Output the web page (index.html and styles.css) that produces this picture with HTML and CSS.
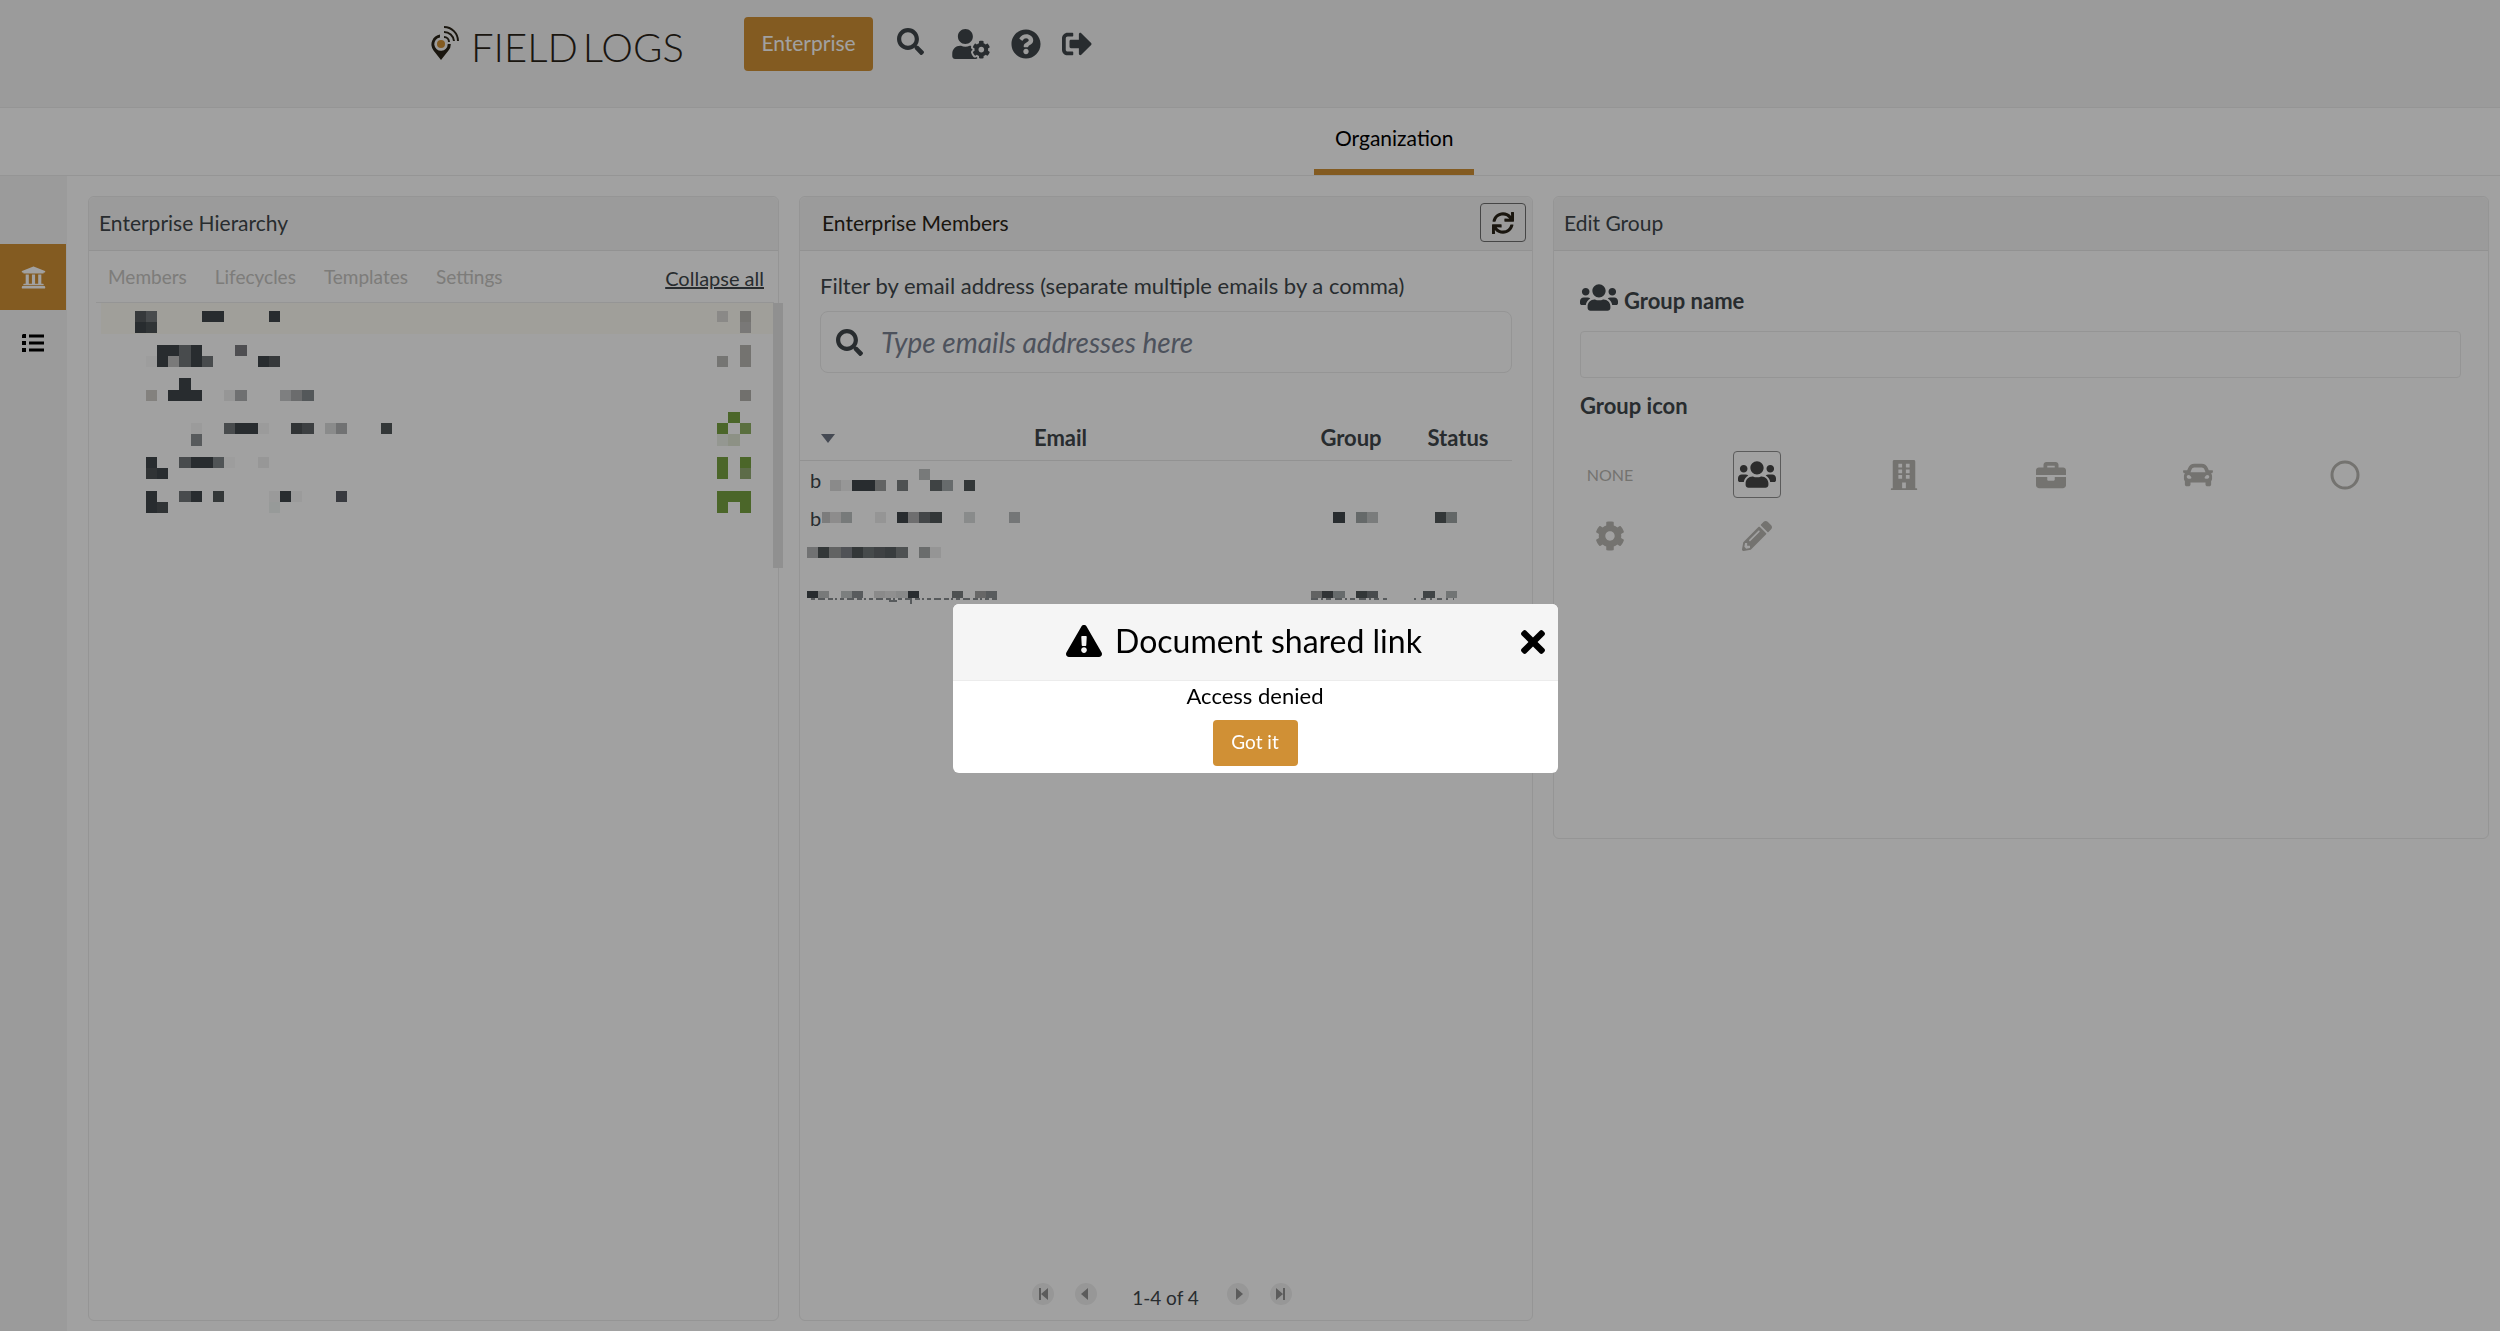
FILE: index.html
```html
<!DOCTYPE html>
<html lang="en">
<head>
    <meta charset="UTF-8">
    <meta name="viewport" content="width=device-width, initial-scale=1.0">
    <title>Field Logs - Organization</title>
    <link rel="stylesheet" href="styles.css">
</head>
<body>
    <!-- Shared icons -->
    <svg class="sprite" aria-hidden="true">
        <symbol id="i-search" viewBox="0 0 512 512"><path d="M505 442.7L405.3 343c-4.5-4.5-10.6-7-17-7H372c27.6-35.3 44-79.7 44-128C416 93.1 322.9 0 208 0S0 93.1 0 208s93.1 208 208 208c48.3 0 92.7-16.4 128-44v16.3c0 6.4 2.5 12.5 7 17l99.7 99.7c9.4 9.4 24.6 9.4 33.9 0l28.3-28.3c9.4-9.4 9.4-24.6.1-34zM208 336c-70.7 0-128-57.2-128-128 0-70.7 57.2-128 128-128 70.7 0 128 57.2 128 128 0 70.7-57.2 128-128 128z"/></symbol>
        <symbol id="i-users" viewBox="0 32 640 448"><path d="M96 224c35.3 0 64-28.7 64-64s-28.7-64-64-64-64 28.7-64 64 28.7 64 64 64zm448 0c35.3 0 64-28.7 64-64s-28.7-64-64-64-64 28.7-64 64 28.7 64 64 64zm32 32h-64c-17.6 0-33.5 7.1-45.1 18.6 40.3 22.1 68.9 62 75.1 109.4h66c17.7 0 32-14.3 32-32v-32c0-35.3-28.7-64-64-64zm-256 0c61.9 0 112-50.1 112-112S381.9 32 320 32 208 82.1 208 144s50.1 112 112 112zm76.8 32h-8.3c-20.8 10-43.9 16-68.5 16s-47.6-6-68.5-16h-8.3C179.6 288 128 339.6 128 403.2V432c0 26.5 21.5 48 48 48h288c26.5 0 48-21.5 48-48v-28.8c0-63.6-51.6-115.2-115.2-115.2zm-223.7-13.4C161.5 263.1 145.6 256 128 256H64c-35.3 0-64 28.7-64 64v32c0 17.7 14.3 32 32 32h65.9c6.3-47.4 34.9-87.3 75.2-109.4z"/></symbol>
    </svg>

    <header class="topbar">
        <a class="logo" href="#">
            <svg width="28" height="34" viewBox="0 0 28 34" aria-hidden="true">
                <path fill-rule="evenodd" d="M10 34L2.500 24.500A10 10 0 0 1 9 8.500V11.500A6.700 6.700 0 1 0 16.700 18H19.800A10 10 0 0 1 17.500 24.500z" fill="#2a2418"/>
                <circle cx="10" cy="18" r="4" fill="#d09035"/>
                <path d="M13 11a5 5 0 0 1 5 5 M13 6a10 10 0 0 1 10 9 M13 1a14 14 0 0 1 14 14" fill="none" stroke="#2a2418" stroke-width="2"/>
            </svg>
            <span>FIELD&thinsp;LOGS</span>
        </a>
        <button class="btn enterprise-btn" type="button">Enterprise</button>
        <nav class="top-icons">
            <a class="search-link" href="#" aria-label="Search"><svg class="i-27"><use href="#i-search"/></svg></a>
            <a href="#" aria-label="User settings"><svg class="i-user" viewBox="0 0 640 512"><path d="M610.5 373.3c2.6-14.1 2.6-28.5 0-42.6l25.8-14.9c3-1.7 4.3-5.2 3.3-8.5-6.7-21.6-18.2-41.2-33.2-57.4-2.3-2.5-6-3.1-9-1.4l-25.8 14.9c-10.9-9.3-23.4-16.5-36.9-21.3v-29.8c0-3.4-2.4-6.4-5.7-7.1-22.3-5-45-4.8-66.2 0-3.3.7-5.7 3.7-5.7 7.1v29.8c-13.5 4.8-26 12-36.9 21.3l-25.8-14.9c-2.9-1.7-6.7-1.1-9 1.4-15 16.2-26.5 35.8-33.2 57.4-1 3.3.4 6.8 3.3 8.5l25.8 14.9c-2.6 14.1-2.6 28.5 0 42.6l-25.8 14.9c-3 1.7-4.3 5.2-3.3 8.5 6.7 21.6 18.2 41.1 33.2 57.4 2.3 2.5 6 3.1 9 1.4l25.8-14.9c10.9 9.3 23.4 16.5 36.9 21.3v29.8c0 3.4 2.4 6.4 5.7 7.1 22.3 5 45 4.8 66.2 0 3.3-.7 5.7-3.7 5.7-7.1v-29.8c13.5-4.8 26-12 36.9-21.3l25.8 14.9c2.9 1.7 6.7 1.1 9-1.4 15-16.2 26.5-35.8 33.2-57.4 1-3.3-.4-6.8-3.3-8.5l-25.8-14.9zM496 400.5c-26.8 0-48.5-21.8-48.5-48.5s21.8-48.5 48.5-48.5 48.5 21.8 48.5 48.5-21.7 48.5-48.5 48.5zM224 256c70.7 0 128-57.3 128-128S294.7 0 224 0 96 57.3 96 128s57.3 128 128 128zm201.2 226.5c-2.3-1.2-4.6-2.6-6.8-3.9l-7.9 4.6c-6 3.4-12.8 5.3-19.6 5.3-10.9 0-21.4-4.6-28.9-12.6-18.3-19.8-32.3-43.9-40.2-69.6-5.5-17.7 1.9-36.4 17.9-45.7l7.9-4.6c-.1-2.6-.1-5.2 0-7.8l-7.9-4.6c-16-9.2-23.4-28-17.9-45.7.9-2.9 2.2-5.8 3.2-8.7-3.8-.3-7.5-1.2-11.4-1.2h-16.7c-22.2 10.2-46.9 16-72.9 16s-50.6-5.8-72.9-16h-16.7C60.2 288 0 348.2 0 422.4V464c0 26.5 21.5 48 48 48h352c10.1 0 19.5-3.2 27.2-8.5-1.2-3.8-2-7.7-2-11.8v-9.2z"/></svg></a>
            <a href="#" aria-label="Help"><svg class="i-30" viewBox="0 0 512 512"><path d="M504 256c0 136.997-111.043 248-248 248S8 392.997 8 256C8 119.083 119.043 8 256 8s248 111.083 248 248zM262.655 90c-54.497 0-89.255 22.957-116.549 63.758-3.536 5.286-2.353 12.415 2.715 16.258l34.699 26.31c5.205 3.947 12.621 3.008 16.665-2.122 17.864-22.658 30.113-35.797 57.303-35.797 20.429 0 45.698 13.148 45.698 32.958 0 14.976-12.363 22.667-32.534 33.976C247.128 238.528 216 254.941 216 296v4c0 6.627 5.373 12 12 12h56c6.627 0 12-5.373 12-12v-1.333c0-28.462 83.186-29.647 83.186-106.667 0-58.002-60.165-102-116.531-102zM256 338c-25.365 0-46 20.635-46 46 0 25.364 20.635 46 46 46s46-20.636 46-46c0-25.365-20.635-46-46-46z"/></svg></a>
            <a href="#" aria-label="Sign out"><svg class="i-30" viewBox="0 0 512 512"><path d="M497 273L329 441c-15 15-41 4.5-41-17v-96H152c-13.3 0-24-10.7-24-24v-96c0-13.3 10.7-24 24-24h136V88c0-21.4 25.9-32 41-17l168 168c9.3 9.4 9.3 24.6 0 34zM192 436v-40c0-6.6-5.4-12-12-12H96c-17.7 0-32-14.3-32-32V160c0-17.7 14.3-32 32-32h84c6.6 0 12-5.4 12-12V76c0-6.6-5.4-12-12-12H96c-53 0-96 43-96 96v192c0 53 43 96 96 96h84c6.6 0 12-5.4 12-12z"/></svg></a>
        </nav>
    </header>

    <nav class="tabbar">
        <a class="tab" href="#">Organization</a>
    </nav>

    <div class="layout">
        <aside class="sidebar">
            <a class="side-link active" href="#" aria-label="Organization"><svg class="i-25" viewBox="0 0 512 512"><path d="M496 128v16a8 8 0 0 1-8 8h-24v12c0 6.627-5.373 12-12 12H60c-6.627 0-12-5.373-12-12v-12H24a8 8 0 0 1-8-8v-16a8 8 0 0 1 4.941-7.392l232-88a7.996 7.996 0 0 1 6.118 0l232 88A8 8 0 0 1 496 128zm-24 304H40c-13.255 0-24 10.745-24 24v16a8 8 0 0 0 8 8h464a8 8 0 0 0 8-8v-16c0-13.255-10.745-24-24-24zM96 192v192H60c-6.627 0-12 5.373-12 12v20h416v-20c0-6.627-5.373-12-12-12h-36V192h-64v192h-64V192h-64v192h-64V192H96z"/></svg></a>
            <a class="side-link" href="#" aria-label="Lists"><svg width="22" height="18" viewBox="0 0 22 18"><path d="M1 0h3v4h-4v-3zM0 7h4v4h-4zM0 14h4v4h-4zM7 .5h15v3h-15zM7 7.5h15v3h-15zM7 14.5h15v3h-15z"/></svg></a>
        </aside>

        <main class="columns">
            <!-- Hierarchy -->
            <section class="card">
                <h2 class="card-header">Enterprise Hierarchy</h2>
                <div class="hierarchy">
                    <div class="sub-tabs">
                        <a href="#">Members</a>
                        <a href="#">Lifecycles</a>
                        <a href="#">Templates</a>
                        <a href="#">Settings</a>
                        <a class="collapse" href="#">Collapse all</a>
                    </div>
                    <div class="tree-wrap">
                        <div class="tree">
                            <svg class="mosaic" width="291" height="202" viewBox="0 0 26 18" data-cells="3:565b5e 4:72777a 9-10:D 15:D|3:D 4:4d5356||5-6:D 7:72777a 8:D 12:7c7c80|4:f9f9f9 5:D 6:c2c2c2 7:72777a 8:D 9:72777a 14:D 15:565b5e||7:D|4:d0cdc8 6-8:D 11:eeeeee 12:b0b2b3 16:c8cacb 17:aaacad 18:858c8f|||8:f5f5f5 11:72777a 12-13:D 14:f5f5f5 17:4d5154 18:5f6567 20:dbdcdc 21:b4b5b6 25:51575a|8:8a8f92||4:D 7:72777a 8-9:D 10:7f8588 11:f9f9f9 14:f0f0f0|4:4d5154 5:D||4:D 7:72777a 8:D 10:51575a 15:f4f4f4 16:D 17:f6f6f6 21:5a5c64|4:D 5:4d5154 15:f0f4f2"></svg>
                            <svg class="mosaic" width="34" height="202" viewBox="0 0 3 18" data-cells="0:dbdad6 2:b8b6b1|2:c0bfbd||2:b8b6b1|0:b9b9b7 2:b8b6b1|||2:b4b2ad||1:G|0:G 2:8fb064|0:ebf0e6 1:dfe6d3||0:G 2:G|0:G 2:93ab74||0-2:G|0:G 2:G"></svg>
                        </div>
                        <div class="scrollbar"></div>
                    </div>
                </div>
            </section>

            <!-- Members -->
            <section class="card members">
                <div class="card-header">
                    <h2>Enterprise Members</h2>
                    <button class="refresh" type="button" aria-label="Refresh"><svg class="i-22" viewBox="0 0 512 512"><path d="M440.65 12.57l4 82.77A247.16 247.16 0 0 0 255.83 8C134.73 8 33.91 94.92 12.29 209.82A12 12 0 0 0 24.09 224h49.05a12 12 0 0 0 11.67-9.26 175.91 175.91 0 0 1 317-56.94l-101.46-4.86a12 12 0 0 0-12.57 12v47.41a12 12 0 0 0 12 12H500a12 12 0 0 0 12-12V12a12 12 0 0 0-12-12h-47.37a12 12 0 0 0-11.98 12.57zM255.83 432a175.61 175.61 0 0 1-146-77.8l101.8 4.87a12 12 0 0 0 12.57-12v-47.4a12 12 0 0 0-12-12H12a12 12 0 0 0-12 12V500a12 12 0 0 0 12 12h47.35a12 12 0 0 0 12-12.6l-4.15-82.57A247.17 247.17 0 0 0 255.83 504c121.11 0 221.93-86.92 243.55-201.82a12 12 0 0 0-11.8-14.18h-49.05a12 12 0 0 0-11.67 9.26A175.86 175.86 0 0 1 255.83 432z"/></svg></button>
                </div>
                <div class="filter">
                    <label for="filter">Filter by email address (separate multiple emails by a comma)</label>
                    <div class="search-box">
                        <svg class="i-27"><use href="#i-search"/></svg>
                        <input id="filter" type="text" placeholder="Type emails addresses here">
                    </div>
                </div>
                <table>
                    <thead>
                        <tr>
                            <th><svg class="sort" width="14" height="9" viewBox="0 0 14 9"><path d="M0 0h14l-7 9z"/></svg>Email</th>
                            <th class="col-group">Group</th>
                            <th class="col-status">Status</th>
                        </tr>
                    </thead>
                    <tbody>
                        <tr>
                            <td><div class="cell"><span class="initial">b</span><svg class="mosaic" width="200" height="22" viewBox="1.3 0 17.9 2" data-cells="10:bfc1c1|2:dbdbdb 3:efefef 4-5:D 6:9b9d9e 8:7c8083 11:646a6c 12:a4aaab 14:51575a"></svg></div></td>
                            <td></td>
                            <td></td>
                        </tr>
                        <tr>
                            <td><div class="cell"><span class="initial">b</span><svg class="mosaic" width="200" height="11" viewBox="1.3 0 17.9 1" data-cells="1:c5c5c5 2:e0dede 3:bdc1c1 6:ececec 8:D 9:afafb0 10:6a7073 11:51575a 14:dadddc 18:b8bcbd"></svg></div></td>
                            <td><svg class="mosaic" width="67" height="11" viewBox="0 0 6 1" data-cells="2:D 4:a0a6a6 5:c2c4c4"></svg></td>
                            <td><svg class="mosaic" width="45" height="11" viewBox="0 0 4 1" data-cells="2:51575a 3:9ea3a3"></svg></td>
                        </tr>
                        <tr class="short">
                            <td><div class="cell"><svg class="mosaic" width="134" height="11" viewBox="0 0 12 1" data-cells="0:b4b5b6 1:51575a 2:9b9d9e 3:7f8388 4:51575a 5:6f7678 6:62686a 7:5a6062 8:7c8083 10:a9abac 11:ededed"></svg></div></td>
                            <td></td>
                            <td></td>
                        </tr>
                        <tr class="last">
                            <td><div class="cell stacked"><svg class="mosaic" width="190" height="7" viewBox="0 0 17 1" data-cells="0:D 1:bfc1c1 3:c5c9c9 4:8c9194 6:dbdbdb 7:e3e3e3 8:d8dada 9:D 13:7c8083 15:a4a4a4 16:8c9194"></svg><svg width="190" height="6" viewBox="0 0 190 6"><path class="feet" stroke-dasharray="4 3 7 3 5 2 2 3" d="M4 1H190"/><path class="feet" d="M82 3h8M104 0v6"/></svg></div></td>
                            <td><div class="cell stacked"><svg class="mosaic" width="67" height="7" viewBox="0 0 6 1" data-cells="0:9b9d9e 1:4d5154 2:a4aaab 4:51575a 5:72777a"></svg><svg width="78" height="6" viewBox="0 0 78 6"><path class="feet" stroke-dasharray="7 3 2 3 5 4" d="M0 1H76"/></svg></div></td>
                            <td><div class="cell stacked"><svg class="mosaic" width="45" height="7" viewBox="0 0 4 1" data-cells="1:666c6f 3:b4b8b8"></svg><svg width="45" height="6" viewBox="0 0 45 6"><path class="feet" stroke-dasharray="2 5 5 4" d="M2 1H42"/></svg></div></td>
                        </tr>
                    </tbody>
                </table>
                <div class="pager">
                    <button type="button" aria-label="First page"><svg width="22" height="22" viewBox="0 0 22 22"><path d="M7 5h2v12h-2zM16 5v12l-7-6z"/></svg></button>
                    <button type="button" aria-label="Previous page"><svg width="22" height="22" viewBox="0 0 22 22"><path d="M13 5v12l-7-6z"/></svg></button>
                    <span>1-4 of 4</span>
                    <button type="button" aria-label="Next page"><svg width="22" height="22" viewBox="0 0 22 22"><path d="M9 5v12l7-6z"/></svg></button>
                    <button type="button" aria-label="Last page"><svg width="22" height="22" viewBox="0 0 22 22"><path d="M13 5h2v12h-2zM6 5v12l7-6z"/></svg></button>
                </div>
            </section>

            <!-- Edit group -->
            <section class="card edit">
                <h2 class="card-header">Edit Group</h2>
                <div class="edit-body">
                    <label class="name-label" for="group-name"><svg class="i-users"><use href="#i-users"/></svg>Group name</label>
                    <input id="group-name" type="text">
                    <h3>Group icon</h3>
                    <div class="icon-grid">
                        <button type="button">NONE</button>
                        <button class="selected" type="button" aria-label="Users"><svg class="i-users"><use href="#i-users"/></svg></button>
                        <button type="button" aria-label="Building"><svg class="i-30" viewBox="0 0 512 512"><path fill-rule="evenodd" d="M468 480h-20V24c0-13-11-24-24-24H88C75 0 64 11 64 24v456H44c-7 0-12 5-12 12v20h448v-20c0-7-5-12-12-12zM160 64h64v64h-64zM288 64h64v64h-64zM160 160h64v64h-64zM288 160h64v64h-64zM160 256h64v64h-64zM288 256h64v64h-64zM224 384h64v96h-64z"/></svg></button>
                        <button type="button" aria-label="Briefcase"><svg class="i-30" viewBox="0 0 512 512"><path d="M320 336c0 8.84-7.16 16-16 16h-96c-8.84 0-16-7.16-16-16v-48H0v144c0 25.6 22.4 48 48 48h416c25.6 0 48-22.4 48-48V288H320v48zm144-208h-80V80c0-25.6-22.4-48-48-48H176c-25.6 0-48 22.4-48 48v48H48c-25.6 0-48 22.4-48 48v80h512v-80c0-25.6-22.4-48-48-48zm-144 0H192V96h128v32z"/></svg></button>
                        <button type="button" aria-label="Car"><svg class="i-30" viewBox="0 0 512 512"><path d="M499.99 176h-59.87l-16.64-41.6C406.38 91.63 365.57 64 319.5 64h-127c-46.06 0-86.88 27.63-103.99 70.4L71.87 176H12.01C4.2 176-1.53 183.34.37 190.91l6 24C7.7 220.25 12.5 224 18.01 224h20.07C24.65 235.73 16 252.78 16 272v48c0 16.12 6.16 30.67 16 41.93V416c0 17.67 14.33 32 32 32h32c17.67 0 32-14.33 32-32v-32h256v32c0 17.67 14.33 32 32 32h32c17.67 0 32-14.33 32-32v-54.07c9.84-11.25 16-25.8 16-41.93v-48c0-19.22-8.65-36.27-22.07-48H494c5.51 0 10.31-3.75 11.64-9.09l6-24c1.89-7.57-3.84-14.91-11.65-14.91zm-352.06-17.83c7.29-18.22 24.94-30.17 44.57-30.17h127c19.63 0 37.28 11.95 44.57 30.17L384 208H128l19.93-49.83zM96 319.8c-19.2 0-32-12.76-32-31.9S76.8 256 96 256s48 28.71 48 47.85-28.8 15.95-48 15.95zm320 0c-19.2 0-48 3.19-48-15.95S396.8 256 416 256s32 12.76 32 31.9-12.8 31.9-32 31.9z"/></svg></button>
                        <button type="button" aria-label="Circle"><svg class="i-30" viewBox="0 0 30 30"><circle cx="15" cy="15" r="13" fill="none" stroke="currentColor" stroke-width="3"/></svg></button>
                        <button type="button" aria-label="Gear"><svg class="i-30" viewBox="0 0 512 512"><path d="M487.4 315.7l-42.6-24.6c4.3-23.2 4.3-47 0-70.2l42.6-24.6c4.9-2.8 7.1-8.6 5.5-14-11.1-35.6-30-67.8-54.7-94.6-3.8-4.1-10-5.1-14.8-2.3L380.8 110c-17.9-15.4-38.5-27.3-60.8-35.1V25.8c0-5.6-3.9-10.5-9.4-11.7-36.7-8.2-74.3-7.8-109.2 0-5.5 1.2-9.4 6.1-9.4 11.7V75c-22.2 7.9-42.8 19.8-60.8 35.1L88.7 85.5c-4.9-2.8-11-1.9-14.8 2.3-24.7 26.7-43.6 58.9-54.7 94.6-1.7 5.4.6 11.2 5.5 14L67.3 221c-4.3 23.2-4.3 47 0 70.2l-42.6 24.6c-4.9 2.8-7.1 8.6-5.5 14 11.1 35.6 30 67.8 54.7 94.6 3.8 4.1 10 5.1 14.8 2.3l42.6-24.6c17.9 15.4 38.5 27.3 60.8 35.1v49.2c0 5.6 3.9 10.5 9.4 11.7 36.7 8.2 74.3 7.8 109.2 0 5.5-1.2 9.4-6.1 9.4-11.7v-49.2c22.2-7.9 42.8-19.8 60.8-35.1l42.6 24.6c4.9 2.8 11 1.9 14.8-2.3 24.7-26.7 43.6-58.9 54.7-94.6 1.5-5.5-.7-11.3-5.6-14.1zM256 336c-44.1 0-80-35.9-80-80s35.9-80 80-80 80 35.9 80 80-35.9 80-80 80z"/></svg></button>
                        <button type="button" aria-label="Pencil"><svg class="i-30" viewBox="0 0 512 512"><path d="M497.9 142.1l-46.1 46.1c-4.7 4.7-12.3 4.7-17 0l-111-111c-4.7-4.7-4.7-12.3 0-17l46.1-46.1c18.7-18.7 49.1-18.7 67.9 0l60.1 60.1c18.8 18.7 18.8 49.1 0 67.9zM284.2 99.8L21.6 362.4.4 483.9c-2.9 16.4 11.4 30.6 27.8 27.8l121.5-21.3 262.6-262.6c4.7-4.7 4.7-12.3 0-17l-111-111c-4.8-4.7-12.4-4.7-17.1 0zM124.1 339.9c-5.5-5.5-5.5-14.3 0-19.8l154-154c5.5-5.5 14.3-5.5 19.8 0s5.5 14.3 0 19.8l-154 154c-5.5 5.5-14.3 5.5-19.8 0zM88 424h48v36.3l-64.5 11.3-31.1-31.1L51.7 376H88v48z"/></svg></button>
                    </div>
                </div>
            </section>
        </main>
    </div>

    <!-- Access denied dialog -->
    <div class="backdrop">
        <div class="modal" role="dialog" aria-labelledby="modal-title">
            <div class="modal-header">
                <svg class="i-warning" viewBox="0 0 576 512"><path d="M569.517 440.013C587.975 472.007 564.806 512 527.94 512H48.054c-36.937 0-59.999-40.055-41.577-71.987L246.423 23.985c18.467-32.009 64.72-31.951 83.154 0l239.94 416.028zM288 354c-25.405 0-46 20.595-46 46s20.595 46 46 46 46-20.595 46-46-20.595-46-46-46zm-43.673-165.346l7.418 136c.347 6.364 5.609 11.346 11.982 11.346h48.546c6.373 0 11.635-4.982 11.982-11.346l7.418-136c.375-6.874-5.098-12.654-11.982-12.654h-63.383c-6.884 0-12.356 5.78-11.981 12.654z"/></svg>
                <h1 id="modal-title">Document shared link</h1>
                <button class="close" type="button" aria-label="Close"><svg width="24" height="24" viewBox="0 80 352 352"><path d="M242.72 256l100.07-100.07c12.28-12.28 12.28-32.19 0-44.48l-22.24-22.24c-12.28-12.28-32.19-12.28-44.48 0L176 189.28 75.93 89.21c-12.28-12.28-32.19-12.28-44.48 0L9.21 111.45c-12.28 12.28-12.28 32.19 0 44.48L109.28 256 9.21 356.07c-12.28 12.28-12.28 32.19 0 44.48l22.24 22.24c12.28 12.28 32.2 12.28 44.48 0L176 322.72l100.07 100.07c12.28 12.28 32.2 12.28 44.48 0l22.24-22.24c12.28-12.28 12.28-32.19 0-44.48L242.72 256z"/></svg></button>
            </div>
            <div class="modal-body">
                <p>Access denied</p>
                <button class="btn" type="button">Got it</button>
            </div>
        </div>
    </div>

    <script src="script.js"></script>
</body>
</html>
```
FILE: styles.css
```css
* {
    margin: 0;
    padding: 0;
    box-sizing: border-box;
}

body {
    min-height: 100vh;
    display: flex;
    flex-direction: column;
    font-family: Lato, "Liberation Sans", sans-serif;
    font-size: 21px;
    line-height: 26px;
    color: #40474b;
    background: #fff;
}

a {
    color: inherit;
    text-decoration: none;
}

button, input {
    font: inherit;
    color: inherit;
    background: none;
    border: none;
}

button {
    cursor: pointer;
}

svg {
    display: block;
    fill: currentColor;
}

h1, h2 {
    font-size: inherit;
    font-weight: 400;
}

.sprite {
    position: absolute;
    width: 0;
    height: 0;
}

/* Icon sizes */
.i-22 { width: 22px; height: 22px; }
.i-25 { width: 25px; height: 25px; }
.i-27 { width: 27px; height: 27px; }
.i-30 { width: 30px; height: 30px; }
.i-user { width: 38px; height: 30px; }
.i-users { width: 38px; height: 27px; }
.i-warning { width: 36px; height: 32px; }

.btn {
    background: #d09035;
    color: #fff;
    border-radius: 4px;
}

/* Top bar */
.topbar {
    display: flex;
    align-items: flex-start;
    height: 108px;
    padding: 17px 0 0 431px;
    background: #f6f6f6;
    border-bottom: 1px solid #ececec;
}

.logo {
    display: flex;
    gap: 12px;
    width: 313px;
    padding-top: 9px;
    color: #2a2418;
    font-size: 40px;
    font-weight: 300;
    line-height: 42px;
    white-space: nowrap;
}

.enterprise-btn {
    height: 54px;
    width: 129px;
    padding-bottom: 2px;
}

.top-icons {
    display: flex;
    align-items: center;
    gap: 21px;
    height: 54px;
    padding-left: 24px;
}

.search-link {
    padding: 0 7px 6px 0;
}

/* Tabs */
.tabbar {
    display: flex;
    height: 68px;
    padding-left: 1314px;
    border-bottom: 1px solid #ececec;
}

.tab {
    padding: 17px 21px 0;
    color: #000;
    border-bottom: 6px solid #d09035;
}

.layout {
    flex: 1;
    display: flex;
}

/* Sidebar */
.sidebar {
    width: 67px;
    padding-top: 68px;
    background: #f6f6f6;
    color: #000;
}

.side-link {
    display: flex;
    align-items: center;
    justify-content: center;
    width: 66px;
    height: 66px;
}

.side-link.active {
    background: #d09035;
    color: #fff;
}

/* Cards */
.columns {
    flex: 1;
    display: grid;
    grid-template-columns: 691fr 734fr 936fr;
    gap: 20px;
    padding: 20px 11px 10px 21px;
}

.card {
    border: 1px solid #ececec;
    border-radius: 6px;
    min-width: 0;
}

.card-header {
    display: flex;
    align-items: center;
    justify-content: space-between;
    height: 54px;
    padding: 0 6px 2px 10px;
    background: #f6f6f6;
    border-bottom: 1px solid #e8e8e8;
    border-radius: 6px 6px 0 0;
}

/* Hierarchy */
.hierarchy {
    padding: 0 4px 0 7px;
}

.sub-tabs {
    display: flex;
    align-items: center;
    gap: 28px;
    height: 52px;
    padding: 0 10px 0 12px;
    border-bottom: 1px solid #ececec;
    color: #c6c5c2;
    font-size: 19px;
}

.collapse {
    margin-left: auto;
    padding-top: 2px;
    color: #40474b;
    font-size: 20px;
    text-decoration: underline;
}

.tree-wrap {
    display: flex;
    margin-right: -9px;
    padding-left: 5px;
}

.tree {
    flex: 1;
    display: flex;
    justify-content: space-between;
    padding: 8px 22px 0 0;
    background: linear-gradient(#fefcf4, #fefcf4) no-repeat;
    background-size: 100% 31px;
}

.scrollbar {
    width: 10px;
    height: 265px;
    background: #e5e5e5;
}

/* Members */
.members {
    display: flex;
    flex-direction: column;
}

.members .card-header {
    padding-left: 22px;
    color: #2a2418;
}

.refresh {
    display: flex;
    align-items: center;
    justify-content: center;
    width: 46px;
    height: 39px;
    border: 1px solid #707070;
    border-radius: 4px;
}

.filter {
    padding: 22px 20px 0;
}

.filter label {
    font-size: 22px;
}

.search-box {
    display: flex;
    align-items: center;
    height: 62px;
    margin-top: 12px;
    padding: 0 15px;
    gap: 18px;
    border: 1px solid #ececec;
    border-radius: 8px;
}

.search-box input {
    flex: 1;
    font-size: 28px;
    font-style: italic;
}

.search-box input::placeholder {
    color: #7a8292;
    opacity: 1;
}

table {
    margin: 52px 20px 0 0;
    border-collapse: collapse;
    table-layout: fixed;
}

th {
    height: 35px;
    padding: 0 12px 9px 21px;
    border-bottom: 1px solid #e8e8e8;
    font-size: 22px;
}

.sort {
    float: left;
    margin-top: 9px;
    fill: #6e7684;
}

.col-group {
    width: 106px;
    padding: 0 0 9px;
}

.col-status {
    width: 108px;
    padding: 0 0 9px;
}

td {
    height: 38px;
}

td + td {
    padding-left: 13px;
}

td:last-child {
    padding-left: 8px;
}

.short td {
    height: 32px;
}

.last td {
    height: 57px;
}

.cell {
    display: flex;
    align-items: center;
}

td:first-child .cell {
    padding-left: 7px;
}

.initial {
    width: 15px;
    padding-left: 3px;
    font-size: 20px;
}

.stacked {
    flex-direction: column;
    align-items: flex-start;
}

.feet {
    fill: none;
    stroke: #8a8f92;
    stroke-width: 2;
}

.mosaic {
    shape-rendering: crispEdges;
}

.pager {
    display: flex;
    justify-content: center;
    gap: 21px;
    margin-top: auto;
    padding: 0 8px 9px 0;
}

.pager button {
    width: 22px;
    height: 22px;
    border-radius: 50%;
    background: #f0f0f0;
    color: #929292;
}

.pager span {
    padding: 2px 7px 0 14px;
    font-size: 19px;
}

/* Edit group */
.edit {
    align-self: start;
    min-height: 643px;
}

.edit-body {
    padding: 33px 27px 0 26px;
    font-size: 22px;
}

.name-label {
    display: flex;
    align-items: flex-end;
    gap: 6px;
    height: 30px;
    font-weight: 700;
}

.name-label svg {
    margin-bottom: 3px;
}

#group-name {
    width: 100%;
    height: 47px;
    margin-top: 17px;
    border: 1px solid #ececec;
    border-radius: 4px;
}

h3 {
    margin-top: 15px;
    font-size: inherit;
}

.icon-grid {
    display: grid;
    grid-template-columns: repeat(6, 1fr);
    row-gap: 14px;
    margin-top: 32px;
    margin-right: -7px;
    padding-left: 6px;
}

.icon-grid button {
    display: flex;
    align-items: center;
    justify-content: center;
    width: 48px;
    height: 47px;
    border-radius: 4px;
    color: #b8b6b1;
    font-size: 16px;
}

.icon-grid .selected {
    border: 1px solid #909090;
    color: #464646;
}

/* Modal */
.backdrop {
    position: fixed;
    inset: 0;
    display: flex;
    align-items: center;
    justify-content: center;
    padding: 46px 0 0 10px;
    background: rgba(0, 0, 0, .37);
}

.modal {
    width: 605px;
    background: #fff;
    border-radius: 6px;
    overflow: hidden;
    color: #000;
    text-align: center;
}

.modal-header {
    display: flex;
    align-items: center;
    justify-content: center;
    gap: 13px;
    position: relative;
    height: 77px;
    padding: 0 22px 2px 0;
    background: #f5f5f5;
    border-bottom: 1px solid #ececec;
}

.modal-header h1 {
    font-size: 32px;
    line-height: 40px;
}

.close {
    position: absolute;
    right: 13px;
    top: 26px;
}

.modal-body {
    padding: 2px 0 7px;
    font-size: 22px;
}

.modal-body .btn {
    width: 85px;
    height: 46px;
    margin-top: 11px;
    padding-bottom: 2px;
    font-size: 19px;
}
```
FILE: script.js
```js
// Rows are split by "|", cells are "column:colour" or "from-to:colour"
const named = { D: "40474b", G: "77a241" };

document.querySelectorAll(".mosaic").forEach(function(svg) {
    svg.setAttribute("preserveAspectRatio", "none");
    svg.dataset.cells.split("|").forEach(function(row, y) {
        if (!row) return;
        row.split(" ").forEach(function(cell) {
            const [cols, colour] = cell.split(":");
            const [from, to] = cols.split("-").map(Number);
            const rect = document.createElementNS("http://www.w3.org/2000/svg", "rect");
            rect.setAttribute("x", from);
            rect.setAttribute("y", y);
            rect.setAttribute("width", (to || from) - from + 1);
            rect.setAttribute("height", 1);
            rect.setAttribute("fill", "#" + (named[colour] || colour));
            svg.appendChild(rect);
        });
    });
});
```
